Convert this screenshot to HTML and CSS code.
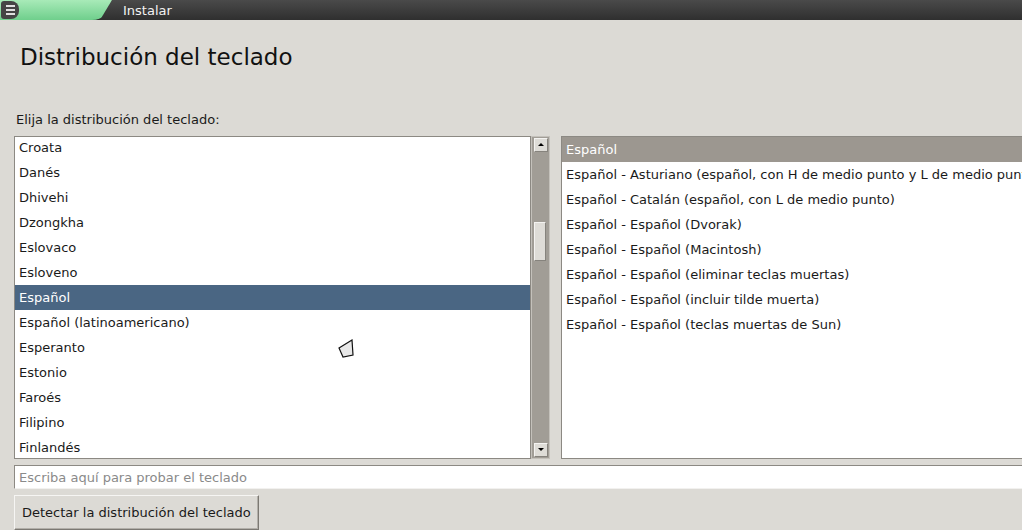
FILE: index.html
```html
<!DOCTYPE html>
<html>
    <head>
        <meta charset="utf-8">
        <title>Instalar</title>
        <link rel="stylesheet" href="styles.css">
    </head>
    <body>
        <div class="topbar">
            <div class="tab">
                <span class="menu-btn"><i></i><i></i><i></i></span>
            </div>
            <span class="top-title">Instalar</span>
        </div>

        <div class="page">
            <h1>Distribución del teclado</h1>
            <p class="label">Elija la distribución del teclado:</p>

            <div class="lists">
                <div class="left-pane">
                    <ul class="list left-list">
                        <li>Croata</li>
                        <li>Danés</li>
                        <li>Dhivehi</li>
                        <li>Dzongkha</li>
                        <li>Eslovaco</li>
                        <li>Esloveno</li>
                        <li class="selected">Español</li>
                        <li>Español (latinoamericano)</li>
                        <li>Esperanto</li>
                        <li>Estonio</li>
                        <li>Faroés</li>
                        <li>Filipino</li>
                        <li>Finlandés</li>
                    </ul>
                    <div class="scrollbar">
                        <span class="arrow up"></span>
                        <div class="trough">
                            <span class="thumb"></span>
                        </div>
                        <span class="arrow down"></span>
                    </div>
                </div>

                <ul class="list right-list">
                    <li class="header">Español</li>
                    <li>Español - Asturiano (español, con H de medio punto y L de medio punto)</li>
                    <li>Español - Catalán (español, con L de medio punto)</li>
                    <li>Español - Español (Dvorak)</li>
                    <li>Español - Español (Macintosh)</li>
                    <li>Español - Español (eliminar teclas muertas)</li>
                    <li>Español - Español (incluir tilde muerta)</li>
                    <li>Español - Español (teclas muertas de Sun)</li>
                </ul>
            </div>

            <input class="test-input" type="text" placeholder="Escriba aquí para probar el teclado">
            <button class="btn">Detectar la distribución del teclado</button>
        </div>

        <!-- puntero del raton -->
        <svg class="cursor" width="20" height="22" viewBox="0 0 20 22">
            <polygon points="2,9 15,1 16,16 6,18" fill="#e8e8e8" stroke="#111" stroke-width="1.2"/>
        </svg>
    </body>
</html>
```

FILE: styles.css
```css
html,body{
    margin: 0; padding: 0;
}
body{
    width: 1022px;
    height: 530px;
    overflow: hidden;
    background: #dcdad5;
    font-family: "DejaVu Sans", sans-serif;
    font-size: 13px;
    color: #1a1a1a;
    position: relative;
}
ul,li,p,h1{
    margin: 0; padding: 0; list-style: none;
}

.topbar{
    height: 20px;
    background: linear-gradient(#4a4a4a, #2f2f2f);
    display: flex;
    align-items: center;
}
.tab{
    width: 112px;
    height: 20px;
    background: linear-gradient(#a8eab8, #6fcf8c);
    border-radius: 0 0 22px 0;
    clip-path: polygon(0 0, 112px 0, 100px 20px, 0 20px);
    display: flex;
    align-items: center;
}
.menu-btn{
    width: 18px;
    height: 18px;
    margin-left: 1px;
    background: #454545;
    border-radius: 3px 8px 8px 3px;
    display: flex;
    flex-direction: column;
    justify-content: center;
    align-items: center;
    gap: 2px;
}
.menu-btn i{
    display: block;
    width: 9px;
    height: 2px;
    background: #e0e0e0;
}
.top-title{
    margin-left: 11px;
    color: #f2f2f2;
    font-size: 13px;
}

.page{
    padding: 0 0 0 14px;
}
h1{
    font-weight: normal;
    font-size: 23px;
    color: #111;
    padding: 24px 0 0 6px;
    height: 29px;
}
.label{
    margin: 39px 0 0 2px;
    height: 16px;
}

.lists{
    display: flex;
    margin-top: 8px;
    height: 323px;
}
.left-pane{
    display: flex;
    width: 536px;
}
.list{
    background: #fff;
    border: 1px solid #8c8983;
    overflow: hidden;
}
.left-list{
    width: 515px;
}
.list li{
    height: 25px;
    line-height: 25px;
    padding-left: 4px;
    white-space: nowrap;
}
.left-list li:first-child{
    margin-top: -2px;
}
.list li.selected{
    background: #4a6683;
    color: #fff;
}
.right-list{
    margin-left: 11px;
    width: 480px;
    flex: none;
    border-right: none;
}
.right-list li.header{
    background: #9c9790;
    color: #fff;
}

.scrollbar{
    width: 17px;
    border: 1px solid #c4c1bb;
    background: #a19d96;
    display: flex;
    flex-direction: column;
    align-items: center;
    padding: 1px 0;
}
.trough{
    flex: 1;
    width: 100%;
    position: relative;
}
.thumb{
    position: absolute;
    left: 2px;
    top: 70px;
    width: 10px;
    height: 37px;
    background: #dedcd7;
    border: 1px solid;
    border-color: #f4f3f1 #86837d #86837d #f4f3f1;
}
.arrow{
    width: 12px;
    height: 12px;
    background: #dedcd7;
    border: 1px solid;
    border-color: #f4f3f1 #86837d #86837d #f4f3f1;
    position: relative;
}
.arrow:after{
    content: '';
    position: absolute;
    left: 3px;
    border-left: 3px solid transparent;
    border-right: 3px solid transparent;
}
.arrow.up:after{
    top: 4px;
    border-bottom: 3px solid #000;
}
.arrow.down:after{
    top: 4px;
    border-top: 3px solid #000;
}

.test-input{
    display: block;
    box-sizing: border-box;
    margin-top: 6px;
    width: 1020px;
    height: 24px;
    border: 1px solid;
    border-color: #8c8983 #dcdad5 #f2f1ef #8c8983;
    padding: 0 4px;
    font-family: "DejaVu Sans", sans-serif;
    font-size: 13px;
    outline: none;
    background: #fff;
}
.test-input::placeholder{
    color: #8a8a8a;
}
.btn{
    display: block;
    margin-top: 6px;
    height: 35px;
    padding: 0 7px;
    background: #dcdad5;
    border: 1px solid;
    border-color: #f6f5f3 #7c7973 #7c7973 #f6f5f3;
    box-shadow: inset -1px -1px 0 #b2afa9;
    font-family: "DejaVu Sans", sans-serif;
    font-size: 13px;
    color: #1a1a1a;
}

.cursor{
    position: absolute;
    left: 337px;
    top: 339px;
}
```
